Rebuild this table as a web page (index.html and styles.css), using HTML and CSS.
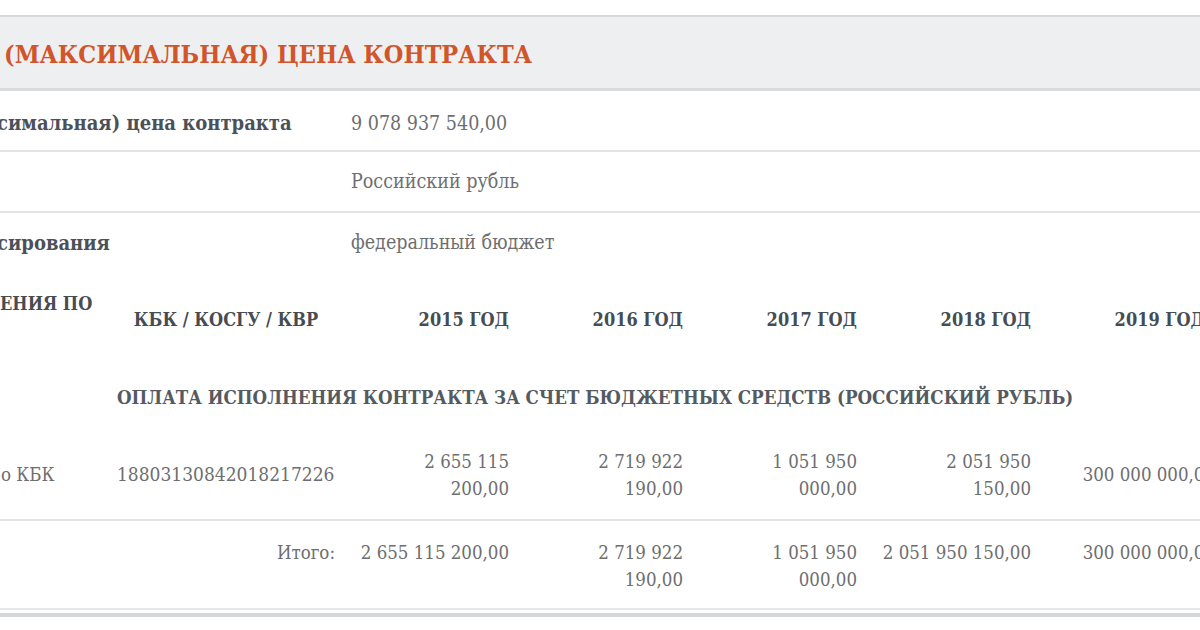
FILE: index.html
```html
<!DOCTYPE html>
<html lang="ru">
<head>
<meta charset="utf-8">
<title>Начальная (максимальная) цена контракта</title>
<link rel="stylesheet" href="styles.css">
</head>
<body>
<section class="section">
  <header class="section-head">
    <h2 class="section-title">(МАКСИМАЛЬНАЯ) ЦЕНА КОНТРАКТА</h2>
  </header>

  <div class="info">
    <div class="info-row">
      <div class="info-label">симальная) цена контракта</div>
      <div class="info-value">9 078 937 540,00</div>
    </div>
    <div class="info-row">
      <div class="info-label"></div>
      <div class="info-value">Российский рубль</div>
    </div>
    <div class="info-row info-row--last">
      <div class="info-label">сирования</div>
      <div class="info-value">федеральный бюджет</div>
    </div>
  </div>

  <table class="pay">
    <colgroup>
      <col class="c-name">
      <col class="c-kbk">
      <col class="c-year">
      <col class="c-year">
      <col class="c-year">
      <col class="c-year">
      <col class="c-year">
    </colgroup>
    <thead>
      <tr class="pay-head">
        <th class="th-name">ЕНИЯ ПО</th>
        <th class="th-kbk">КБК / КОСГУ / КВР</th>
        <th class="th-year">2015 ГОД</th>
        <th class="th-year">2016 ГОД</th>
        <th class="th-year">2017 ГОД</th>
        <th class="th-year">2018 ГОД</th>
        <th class="th-year">2019 ГОД</th>
      </tr>
    </thead>
    <tbody>
      <tr class="pay-group">
        <td></td>
        <td colspan="6" class="group-title">ОПЛАТА ИСПОЛНЕНИЯ КОНТРАКТА ЗА СЧЕТ БЮДЖЕТНЫХ СРЕДСТВ (РОССИЙСКИЙ РУБЛЬ)</td>
      </tr>
      <tr class="pay-row">
        <td class="td-name">о КБК</td>
        <td class="td-kbk">18803130842018217226</td>
        <td class="td-num">2 655 115<br>200,00</td>
        <td class="td-num">2 719 922<br>190,00</td>
        <td class="td-num">1 051 950<br>000,00</td>
        <td class="td-num">2 051 950<br>150,00</td>
        <td class="td-num td-last">300 000 000,00</td>
      </tr>
      <tr class="pay-total">
        <td></td>
        <td class="td-total-label">Итого:</td>
        <td class="td-num">2 655 115 200,00</td>
        <td class="td-num">2 719 922<br>190,00</td>
        <td class="td-num">1 051 950<br>000,00</td>
        <td class="td-num">2 051 950 150,00</td>
        <td class="td-num td-last">300 000 000,00</td>
      </tr>
    </tbody>
  </table>
</section>
</body>
</html>
```

FILE: styles.css
```css
html, body {
  margin: 0;
  padding: 0;
  background: #ffffff;
  overflow: hidden;
}

body {
  width: 1200px;
  height: 630px;
  font-family: "Roboto Slab", "DejaVu Serif Condensed", "DejaVu Serif", serif;
  color: #6d6e70;
}

.section {
  margin-top: 15px;
  border-top: 2px solid #d5d7da;
  border-bottom: 4px solid #d6d7d9;
}

.section-head {
  display: flex;
  align-items: center;
  height: 74px;
  padding: 4px 0 0 4px;
  box-sizing: border-box;
  background: #eeeff1;
  border-bottom: 3px solid #d9dbde;
}

.section-title {
  margin: 0;
  font-size: 25px;
  font-weight: 700;
  color: #d2552a;
  white-space: nowrap;
}

.info-row {
  display: grid;
  grid-template-columns: 351px 1fr;
  align-items: center;
  height: 59px;
  border-bottom: 2px solid #e3e4e5;
}

.info-row:first-child {
  padding-top: 5px;
  height: 54px;
}

.info-row--last {
  border-bottom: none;
}

.info-label {
  margin-left: -3px;
  font-size: 20px;
  font-weight: 700;
  color: #4b5158;
  white-space: nowrap;
}

.info-value {
  font-size: 19.5px;
  color: #6d6e70;
  white-space: nowrap;
}

.pay {
  width: 1215px;
  table-layout: fixed;
  border-collapse: collapse;
  border-bottom: 2px solid #e6e7e8;
  margin-bottom: 3px;
}

.c-name { width: 107px; }
.c-kbk { width: 238px; }
.c-year { width: 174px; }

.pay th {
  font-size: 18px;
  font-weight: 700;
  color: #474c53;
  white-space: nowrap;
}

.pay-head {
  height: 94px;
}

.th-name {
  vertical-align: top;
  text-align: left;
  padding: 21px 0 0 0;
}

.th-kbk {
  text-align: center;
  padding: 0 10px;
}

.th-year {
  text-align: right;
  padding: 0 10px 0 0;
}

.pay-group {
  height: 62px;
}

.pay td.group-title {
  padding: 0 10px;
  font-size: 18.6px;
  font-weight: 700;
  color: #555a61;
  white-space: nowrap;
}

.pay td {
  font-size: 18.5px;
  line-height: 27px;
  color: #6d6e70;
}

.pay-row {
  height: 92px;
  border-bottom: 2px solid #e3e4e5;
}

.pay-row td {
  vertical-align: middle;
  padding-top: 3px;
}

.td-name {
  text-align: left;
  white-space: nowrap;
}

.pay td.td-kbk {
  padding-left: 10px;
  font-size: 19px;
  white-space: nowrap;
}

.td-num {
  text-align: right;
  padding-right: 10px;
  white-space: nowrap;
}

.pay td.td-last {
  padding-right: 0;
}

.pay-total td {
  vertical-align: top;
  padding-top: 18px;
  padding-bottom: 15px;
}

.td-total-label {
  text-align: right;
  padding-right: 10px;
}
```
